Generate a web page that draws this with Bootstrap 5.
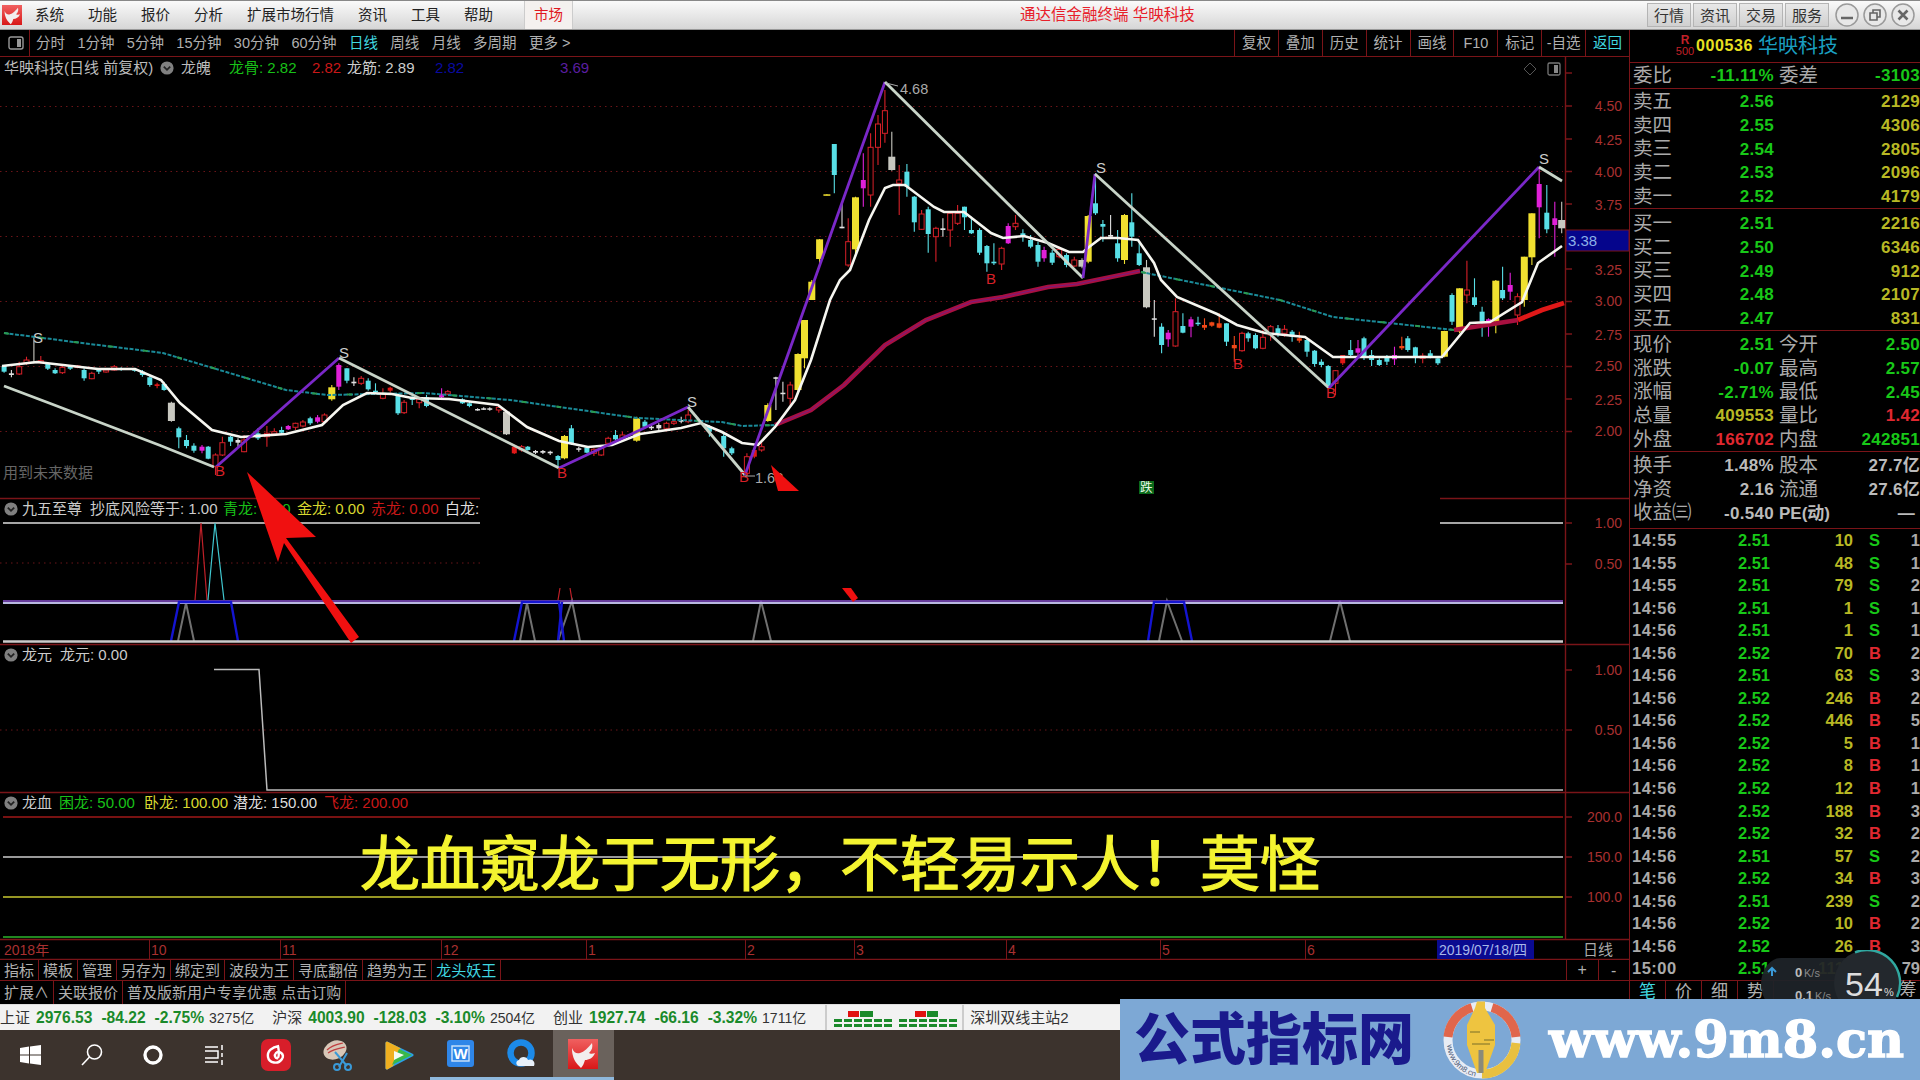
<!DOCTYPE html>
<html>
<head>
  <meta charset="UTF-8">
  <title>通达信金融终端 华映科技</title>
  <link href="https://cdn.jsdelivr.net/npm/bootstrap@5.3.0/dist/css/bootstrap.min.css" rel="stylesheet">
  <style>
    html, body {
      width: 1920px;
      height: 1080px;
      margin: 0;
      overflow: hidden;
      background: #000;
      font-family: "Liberation Sans", "Noto Sans CJK SC", sans-serif;
      font-size: 14.5px;
      line-height: 1;
      color: #b0b0b0;
    }

    /* Title bar */
    .title-bar {
      height: 30px;
      background: linear-gradient(#fafafa, #d6d6d6);
      border-top: 1px solid #888;
      border-bottom: 1px solid #999;
      color: #222;
      padding-right: 5px;
    }
    .app-logo { width: 35px; padding-left: 2px; }
    .menu-list { gap: 24px; }
    .market-tab {
      margin-left: 31px;
      width: 49px;
      height: 28px;
      background: #f4f1ef;
      border-left: 1px solid #ccc;
      border-right: 1px solid #ccc;
      color: #e01820;
    }
    .app-title { margin-left: 447px; color: #e8202a; font-size: 15.5px; }
    .side-btn {
      width: 44px;
      height: 24px;
      margin-right: 2px;
      background: linear-gradient(#e8e8e8, #d0d0d0);
      border: 1px solid #b4b4b4;
      color: #333;
      font-size: 15px;
    }
    .win-btn { margin-left: 4px; }

    /* Chart column */
    .work-area { height: 974px; }
    .chart-col { width: 1629px; }
    .quote-col { width: 291px; border-left: 1px solid #7a1418; }
    .tool-bar { height: 27px; border-bottom: 1px solid #7a1418; }
    .period-box { width: 30px; height: 26px; border-right: 1px solid #7a1418; padding-left: 8px; }
    .period-list { gap: 12.4px; padding-left: 6px; }
    .is-active { color: #40d8e0; }
    .tool-cell {
      width: 43.9px;
      height: 26px;
      border-left: 1px solid #7a1418;
    }
    .chart-canvas { display: block; width: 1629px; height: 903px; }
    .chart-canvas text { font-size: 15px; fill: #b0b0b0; }
    .chart-canvas .axis-num { font-size: 14px; fill: #a83030; }
    .chart-canvas .big-note { font-size: 60px; fill: #f4f430; stroke: #f4f430; stroke-width: 1.2px; }
    .tab-row { border-bottom: 1px solid #7a1418; font-size: 15px; }
    .tab-row-a { height: 21px; }
    .tab-row-b { height: 23px; border-bottom: 0; }
    .tab-cell { padding: 0 4px; height: 100%; border-right: 1px solid #7a1418; }
    .zoom-box { width: 63px; height: 100%; border-left: 1px solid #7a1418; font-size: 16px; }
    .zoom-box span { flex: 1; text-align: center; }
    .zoom-box span + span { border-left: 1px solid #7a1418; height: 100%; line-height: 21px; }

    /* Quote column */
    .stock-head { height: 33px; border-bottom: 1px solid #7a1418; padding-left: 45px; }
    .rank-tag { font-size: 11px; color: #c02028; text-align: center; line-height: 11px; width: 20px; }
    .rank-tag b { font-size: 12px; display: block; }
    .stock-code { font-size: 16px; font-weight: 700; color: #e8e020; margin-left: 1px; letter-spacing: .6px; }
    .stock-name { font-size: 20px; color: #1a9fc0; margin-left: 5px; }
    .quote-block { border-bottom: 1px solid #7a1418; overflow: hidden; }
    .block-ratio { height: 26px; }
    .block-sell { height: 120px; padding-top: 1px; }
    .block-buy { height: 122px; padding-top: 3px; }
    .block-stats { height: 121px; padding-top: 2px; }
    .block-info { height: 77px; padding-top: 2px; }
    .block-ticks { height: 452px; }
    .quote-row {
      display: grid;
      grid-template-columns: 40px 101px 45px 1fr;
      align-items: center;
      height: 23.7px;
      padding-left: 3px;
      font-size: 17px;
      font-weight: 700;
      white-space: nowrap;
    }
    .block-ratio .quote-row { height: 25px; }
    .quote-row > :nth-child(2), .quote-row > :nth-child(4) { text-align: right; letter-spacing: .3px; }
    .quote-row > :nth-child(3) { padding-left: 5px; }
    .zh-label { font-size: 19.5px; font-weight: 400; color: #aaa; }
    .tick-row {
      display: grid;
      grid-template-columns: 60px 78px 83px 16px 12px 1fr;
      align-items: center;
      height: 22.55px;
      padding-left: 2px;
      font-size: 16.5px;
      font-weight: 700;
      white-space: nowrap;
    }
    .tick-row > :first-child { color: #bbb; letter-spacing: .5px; }
    .tick-row > :nth-child(2), .tick-row > :nth-child(3), .tick-row > :nth-child(6) { text-align: right; }
    .tick-row > :nth-child(6), .tick-row > :first-child { color: #aaa; }
    .up-num { color: #e02830; }
    .down-num { color: #18c818; }
    .vol-num { color: #b8b824; }
    .plain-num { color: #bbb; }
    .quote-tabs { height: 23px; font-size: 17px; }
    .quote-tab { width: 36px; text-align: center; border-right: 1px solid #7a1418; height: 100%; padding-top: 2px; }

    /* Status bar and taskbar */
    .status-bar {
      height: 26px;
      background: #f2f2f2;
      border-top: 1px solid #ddd;
      color: #333;
      white-space: nowrap;
      font-size: 15px;
    }
    .status-bar b { color: #1a8a2a; margin-left: 6px; font-size: 15.6px; }
    .status-bar b + b { margin-left: 9px; }
    .status-amount { margin-left: 5px; font-size: 14px; }
    .status-group { margin-left: 18px; }
    .signal-box { height: 100%; margin-left: 19px; padding: 0 4px 0 7px; border-left: 2px solid #ccc; border-right: 2px solid #ccc; }
    .server-name { margin-left: 6px; }
    .task-bar { height: 50px; background: #3c332d; }
    .task-cell { width: 61.4px; height: 50px; }
    .task-cell.is-open { border-bottom: 3px solid #8fb8dc; }
    .task-cell.is-front { background: #6a625c; border-bottom: 3px solid #8fb8dc; }

    /* Speed widget and site banner lie over the page */
    .speed-widget { left: 1757px; top: 950px; }
    .site-banner {
      left: 1120px;
      top: 999px;
      width: 800px;
      height: 81px;
      background: #7da8d5;
      white-space: nowrap;
    }
    .site-name {
      width: 322px;
      padding-left: 14px;
      font-size: 56px;
      font-weight: 900;
      color: #1a1a8c;
    }
    .site-url {
      margin-left: 27px;
      font-family: "DejaVu Serif", serif;
      font-size: 51px;
      font-weight: 700;
      color: #fff;
      -webkit-text-stroke: 1.4px #fff;
    }
  </style>
</head>
<body>
  <svg width="0" height="0" class="position-absolute">
    <defs>
      <linearGradient id="logoRed" x1="0" y1="0" x2="0" y2="1">
        <stop offset="0" stop-color="#f06060"/>
        <stop offset="1" stop-color="#d81818"/>
      </linearGradient>
      <symbol id="tdxLogo" viewBox="0 0 30 30">
        <rect width="30" height="30" fill="url(#logoRed)"/>
        <path d="M4 9C6 14 9 15 12 14C16 13 20 9 24 4C25 8 24 11 21 14C22 15 25 15 27 14C25 19 21 21 17 21C16 24 15 27 13 29C10 26 6 22 5 17C4 14 4 11 4 9Z" fill="#f2eeee"/>
      </symbol>
      <symbol id="foldIcon" viewBox="0 0 14 14">
        <circle cx="7" cy="7" r="6.6" fill="#808080"/>
        <path d="M3.8 5.6L7 8.8L10.2 5.6" fill="none" stroke="#222" stroke-width="1.8"/>
      </symbol>
    </defs>
  </svg>

  <!-- Title bar -->
  <div class="title-bar d-flex align-items-center">
    <div class="app-logo d-flex"><svg width="20" height="20"><use href="#tdxLogo"/></svg></div>
    <div class="menu-list d-flex">
      <span>系统</span><span>功能</span><span>报价</span><span>分析</span><span>扩展市场行情</span><span>资讯</span><span>工具</span><span>帮助</span>
    </div>
    <div class="market-tab d-flex align-items-center justify-content-center">市场</div>
    <div class="app-title">通达信金融终端 华映科技</div>
    <div class="d-flex align-items-center ms-auto">
      <div class="side-btn d-flex align-items-center justify-content-center">行情</div>
      <div class="side-btn d-flex align-items-center justify-content-center">资讯</div>
      <div class="side-btn d-flex align-items-center justify-content-center">交易</div>
      <div class="side-btn d-flex align-items-center justify-content-center">服务</div>
      <svg class="win-btn" width="24" height="24"><circle cx="12" cy="12" r="11" fill="#e8e8e8" stroke="#9a9a9a" stroke-width="1.5"/><path d="M6 15H18" stroke="#666" stroke-width="2.5"/></svg>
      <svg class="win-btn" width="24" height="24"><circle cx="12" cy="12" r="11" fill="#e8e8e8" stroke="#9a9a9a" stroke-width="1.5"/><path d="M7 10H14V17H7ZM10 10V7H17V14H14" fill="none" stroke="#666" stroke-width="1.6"/></svg>
      <svg class="win-btn" width="24" height="24"><circle cx="12" cy="12" r="11" fill="#e8e8e8" stroke="#9a9a9a" stroke-width="1.5"/><path d="M7.5 7.5L16.5 16.5M16.5 7.5L7.5 16.5" stroke="#666" stroke-width="2.6"/></svg>
    </div>
  </div>

  <div class="work-area d-flex">
    <!-- Chart column -->
    <div class="chart-col d-flex flex-column">
      <div class="tool-bar d-flex align-items-center">
        <div class="period-box d-flex align-items-center">
          <svg width="16" height="14"><rect x="1" y="1" width="14" height="12" rx="2" fill="none" stroke="#999" stroke-width="1.4"/><rect x="9" y="3" width="4" height="8" fill="#999"/></svg>
        </div>
        <div class="period-list d-flex">
          <span>分时</span><span>1分钟</span><span>5分钟</span><span>15分钟</span><span>30分钟</span><span>60分钟</span><span class="is-active">日线</span><span>周线</span><span>月线</span><span>多周期</span><span>更多 &gt;</span>
        </div>
        <div class="d-flex ms-auto">
          <div class="tool-cell d-flex align-items-center justify-content-center">复权</div>
          <div class="tool-cell d-flex align-items-center justify-content-center">叠加</div>
          <div class="tool-cell d-flex align-items-center justify-content-center">历史</div>
          <div class="tool-cell d-flex align-items-center justify-content-center">统计</div>
          <div class="tool-cell d-flex align-items-center justify-content-center">画线</div>
          <div class="tool-cell d-flex align-items-center justify-content-center">F10</div>
          <div class="tool-cell d-flex align-items-center justify-content-center">标记</div>
          <div class="tool-cell d-flex align-items-center justify-content-center">-自选</div>
          <div class="tool-cell d-flex align-items-center justify-content-center is-active">返回</div>
        </div>
      </div>

      <!-- Free canvas, coordinates are page pixels -->
      <svg class="chart-canvas" viewBox="0 57 1629 903" xmlns="http://www.w3.org/2000/svg">
        <!-- axis and pane lines -->
        <g stroke="#7a1418" stroke-width="1.4" fill="none">
          <path d="M1565.5 57V940"/>
          <path d="M0 498.5H480M1440 498.5H1629"/>
          <path d="M0 644.5H1629M0 792.5H1629M0 939.5H1629M0 959.5H1629"/>
          <path d="M1566 73H1572M1566 106H1572M1566 139H1572M1566 171.5H1572M1566 204H1572M1566 236.5H1572M1566 269H1572M1566 301.5H1572M1566 334H1572M1566 366.5H1572M1566 399H1572M1566 431.5H1572"/>
          <path d="M1566 523H1572M1566 564H1572M1566 670H1572M1566 730H1572M1566 817H1572M1566 857H1572M1566 897H1572"/>
        </g>
        <g stroke="#6a1418" stroke-width="1" stroke-dasharray="1.5 4" fill="none">
          <path d="M0 106.5H1563M0 171.5H1563M0 236.5H1563M0 301.5H1563M0 366.5H1563M0 431.5H1563"/>
          <path d="M0 563H480M0 730H1563"/>
        </g>
        <g text-anchor="end">
          <text class="axis-num" x="1622" y="111">4.50</text>
          <text class="axis-num" x="1622" y="145">4.25</text>
          <text class="axis-num" x="1622" y="177">4.00</text>
          <text class="axis-num" x="1622" y="210">3.75</text>
          <text class="axis-num" x="1622" y="275">3.25</text>
          <text class="axis-num" x="1622" y="306">3.00</text>
          <text class="axis-num" x="1622" y="340">2.75</text>
          <text class="axis-num" x="1622" y="371">2.50</text>
          <text class="axis-num" x="1622" y="405">2.25</text>
          <text class="axis-num" x="1622" y="436">2.00</text>
          <text class="axis-num" x="1622" y="528">1.00</text>
          <text class="axis-num" x="1622" y="569">0.50</text>
          <text class="axis-num" x="1622" y="675">1.00</text>
          <text class="axis-num" x="1622" y="735">0.50</text>
          <text class="axis-num" x="1622" y="822">200.0</text>
          <text class="axis-num" x="1622" y="862">150.0</text>
          <text class="axis-num" x="1622" y="902">100.0</text>
        </g>
        <rect x="1566" y="230" width="63" height="21" fill="#05058c" stroke="#7a1418"/>
        <text x="1568" y="246" style="fill:#8cb0e8">3.38</text>

        <g id="candles"></g>

        <!-- long moving average -->
        <g fill="none" stroke-width="2">
          <polyline stroke="#1a8a98" stroke-dasharray="4 1.5" points="4,333 82,343 163,353 286,390 327,395 424,393 510,400 637,418 722,422 742,426 775,425"/>
          <polyline stroke="#1a8a98" stroke-dasharray="4 1.5" points="1141,272 1280,300 1333,317 1454,330"/>
          <polyline stroke="#2a9a50" stroke-dasharray="5 30" points="4,333 82,343 163,353 286,390 327,395 424,393 510,400 637,418 722,422 742,426 775,425"/>
          <polyline stroke="#2a9a50" stroke-dasharray="5 30" points="1141,272 1280,300 1333,317 1454,330"/>
        </g>
        <polyline fill="none" stroke="#a81040" stroke-width="4.6" points="775,425 811,410 844,385 885,345 926,320 971,302 1003,297 1048,287 1077,284 1140,271"/>
        <polyline fill="none" stroke="#7a1a80" stroke-width="1" points="775,425 811,410 844,385 885,345 926,320 971,302 1003,297 1048,287 1077,284 1140,271"/>
        <polyline fill="none" stroke="#a81040" stroke-width="4.6" points="1454,330 1518,320"/>
        <polyline fill="none" stroke="#e01818" stroke-width="4.8" points="1518,320 1542,310 1564,303"/>
        <!-- short moving average -->
        <polyline fill="none" stroke="#f6f6f0" stroke-width="2.6" points="2,366 37,362 98,369 135,369 161,380 180,403 212,430 241,437 286,434 322,425 343,405 367,393 392,394 412,398 449,399 498,405 527,427 559,441 588,447 612,445 640,434 681,428 701,423 722,432 742,443 758,445 775,427 795,400 811,360 830,300 840,280 850,270 869,220 885,188 893,185 905,185 934,207 944,212 964,212 991,233 1003,238 1024,236 1048,243 1069,252 1083,252 1089,247 1101,238 1118,238 1138,240 1154,263 1161,280 1177,297 1217,314 1237,325 1265,333 1305,337 1333,357 1442,357 1470,323 1490,322 1522,302 1538,263 1562,246"/>
        <!-- zigzag -->
        <g fill="none" stroke-width="2.8">
          <polyline stroke="#c8d4c8" points="4,386 49,403 159,445 214,467"/>
          <polyline stroke="#7a28c8" points="216,467 339,358"/>
          <polyline stroke="#c8d4c8" points="339,358 559,468"/>
          <polyline stroke="#7a28c8" points="559,468 640,430 688,407"/>
          <polyline stroke="#c8d4c8" points="688,407 745,475"/>
          <polyline stroke="#7a28c8" points="745,475 885,82"/>
          <polyline stroke="#c8d4c8" points="885,82 1083,278"/>
          <polyline stroke="#7a28c8" points="1083,278 1095,174"/>
          <polyline stroke="#c8d4c8" points="1095,174 1329,388"/>
          <polyline stroke="#7a28c8" points="1329,388 1539,167"/>
          <polyline stroke="#c8d4c8" points="1539,167 1562,181"/>
        </g>
        <!-- markers -->
        <text x="33" y="343" style="fill:#ccc;font-size:15px">S</text>
        <text x="339" y="358" style="fill:#ccc;font-size:15px">S</text>
        <text x="687" y="407" style="fill:#ccc;font-size:15px">S</text>
        <text x="1096" y="173" style="fill:#ccc;font-size:15px">S</text>
        <text x="1539" y="164" style="fill:#ccc;font-size:15px">S</text>
        <text x="215" y="476" style="fill:#d82028;font-size:15px">B</text>
        <text x="557" y="478" style="fill:#d82028;font-size:15px">B</text>
        <text x="739" y="482" style="fill:#d82028;font-size:15px">B</text>
        <text x="986" y="284" style="fill:#d82028;font-size:15px">B</text>
        <text x="1233" y="369" style="fill:#d82028;font-size:15px">B</text>
        <text x="1326" y="398" style="fill:#d82028;font-size:15px">B</text>
        <text x="900" y="94" style="fill:#aaa;font-size:14.5px">4.68</text>
        <text x="755" y="483" style="fill:#aaa;font-size:14.5px">1.68</text>
        <path d="M886 83L898 86M745 476L755 476" stroke="#aaa"/>
        <rect x="1139" y="481" width="15" height="13" fill="#0a6a1a"/>
        <text x="1140" y="492" style="fill:#e8f8e8;font-size:12.5px">跌</text>
        <path d="M1530 63L1536 69L1530 75L1524 69Z" fill="none" stroke="#555"/>
        <rect x="1548" y="63" width="12" height="12" rx="1.5" fill="none" stroke="#777" stroke-width="1.3"/>
        <rect x="1554" y="65" width="4" height="8" fill="#888"/>
        <text x="3" y="478" style="fill:#666">用到未来数据</text>

        <!-- main legend -->
        <text x="4" y="73" style="fill:#bbb">华映科技(日线 前复权)</text>
        <use href="#foldIcon" x="160" y="61" width="14" height="14"/>
        <text x="181" y="73" style="fill:#bbb">龙魄</text>
        <text x="229" y="73" style="fill:#18c018">龙骨: 2.82</text>
        <text x="312" y="73" style="fill:#c81818">2.82</text>
        <text x="347" y="73" style="fill:#ccc">龙筋: 2.89</text>
        <text x="435" y="73" style="fill:#0a0aa0">2.82</text>
        <text x="560" y="73" style="fill:#5a1ea0">3.69</text>

        <!-- indicator pane 1 -->
        <use href="#foldIcon" x="4" y="502" width="14" height="14"/>
        <text x="22" y="514" style="fill:#ccc">九五至尊</text>
        <text x="90" y="514" style="fill:#ccc">抄底风险等于: 1.00</text>
        <text x="223" y="514" style="fill:#18c018">青龙: 0.00</text>
        <text x="297" y="514" style="fill:#d8d830">金龙: 0.00</text>
        <text x="371" y="514" style="fill:#c81818">赤龙: 0.00</text>
        <text x="445" y="514" style="fill:#ddd">白龙:</text>
        <path d="M3 523H480M1440 523H1563" stroke="#ddd" stroke-width="1.5"/>
        <g fill="none" stroke-width="1.2">
          <polyline stroke="#c02028" points="195,600 201,523 207,600"/>
          <polyline stroke="#40c8d0" points="208,600 215,523 224,600"/>
          <path stroke="#c02028" d="M558 600L560 588M572 600L570 588"/>
        </g>
        <g fill="none" stroke="#707070" stroke-width="2">
          <polyline points="178,641 186,603 194,641"/>
          <polyline points="520,641 527,603 535,641"/>
          <polyline points="558,641 572,601 580,641"/>
          <polyline points="753,641 761,601 771,641"/>
          <polyline points="1159,641 1167,601 1182,641"/>
          <polyline points="1330,641 1340,601 1350,641"/>
        </g>
        <path d="M3 603H1563" stroke="#b8b8e0" stroke-width="2"/>
        <path d="M3 601H1563" stroke="#8a50d0" stroke-width="1.5"/>
        <g fill="none" stroke="#1414d0" stroke-width="2.4">
          <polyline points="171,641 179,602 231,602 238,641"/>
          <polyline points="514,641 522,602 559,602 564,641"/>
          <path d="M558 641L562 602"/>
          <polyline points="1148,641 1154,602 1184,602 1192,641"/>
        </g>
        <path d="M3 641.5H1563" stroke="#ccc" stroke-width="2.4"/>

        <!-- indicator pane 2 -->
        <use href="#foldIcon" x="4" y="648" width="14" height="14"/>
        <text x="22" y="660" style="fill:#ccc">龙元</text>
        <text x="60" y="660" style="fill:#ccc">龙元: 0.00</text>
        <polyline fill="none" stroke="#bbb" stroke-width="1.5" points="214,669.5 259,669.5 267,790 1563,790"/>

        <!-- indicator pane 3 -->
        <use href="#foldIcon" x="4" y="796" width="14" height="14"/>
        <text x="22" y="808" style="fill:#ccc">龙血</text>
        <text x="59" y="808" style="fill:#18c018">困龙: 50.00</text>
        <text x="144" y="808" style="fill:#d8d830">卧龙: 100.00</text>
        <text x="233" y="808" style="fill:#ddd">潜龙: 150.00</text>
        <text x="324" y="808" style="fill:#c81818">飞龙: 200.00</text>
        <path d="M3 817H1563" stroke="#a01818" stroke-width="1.5"/>
        <path d="M3 857H1563" stroke="#ccc" stroke-width="1.5"/>
        <path d="M3 897H1563" stroke="#c8c830" stroke-width="1.5"/>
        <path d="M3 937H1563" stroke="#2cb42c" stroke-width="1.5"/>
        <text class="big-note" x="360" y="886">龙血窥龙于无形，不轻易示人！莫怪</text>

        <!-- annotation arrows pasted over the chart -->
        <g fill="#f01010">
          <polygon points="247,472 316,537 286,538 359,637 351,643 284,543 278,562"/>
          <polygon points="771,465 799,491 778,491"/>
          <polygon points="842,588 851,588 858,598 853,602"/>
        </g>

        <!-- date axis -->
        <path d="M149.5 940V959M280.5 940V959M441.5 940V959M586.5 940V959M745.5 940V959M854.5 940V959M1006.5 940V959M1160.5 940V959M1305.5 940V959" stroke="#7a1418" fill="none"/>
        <rect x="1437" y="940" width="97" height="19" fill="#0a0a90"/>
        <text class="axis-num" x="4" y="955">2018年</text>
        <text class="axis-num" x="151" y="955">10</text>
        <text class="axis-num" x="282" y="955">11</text>
        <text class="axis-num" x="443" y="955">12</text>
        <text class="axis-num" x="588" y="955">1</text>
        <text class="axis-num" x="747" y="955">2</text>
        <text class="axis-num" x="856" y="955">3</text>
        <text class="axis-num" x="1008" y="955">4</text>
        <text class="axis-num" x="1162" y="955">5</text>
        <text class="axis-num" x="1307" y="955">6</text>
        <text x="1439" y="955" style="fill:#a8b8e8;font-size:14px">2019/07/18/四</text>
        <text x="1583" y="955" style="fill:#aaa">日线</text>
      </svg>

      <div class="tab-row tab-row-a d-flex align-items-center">
        <div class="tab-cell d-flex align-items-center">指标</div>
        <div class="tab-cell d-flex align-items-center">模板</div>
        <div class="tab-cell d-flex align-items-center">管理</div>
        <div class="tab-cell d-flex align-items-center">另存为</div>
        <div class="tab-cell d-flex align-items-center">绑定到</div>
        <div class="tab-cell d-flex align-items-center">波段为王</div>
        <div class="tab-cell d-flex align-items-center">寻底翻倍</div>
        <div class="tab-cell d-flex align-items-center">趋势为王</div>
        <div class="tab-cell d-flex align-items-center is-active">龙头妖王</div>
        <div class="zoom-box d-flex align-items-center ms-auto"><span>+</span><span>-</span></div>
      </div>
      <div class="tab-row tab-row-b d-flex align-items-center">
        <div class="tab-cell d-flex align-items-center">扩展∧</div>
        <div class="tab-cell d-flex align-items-center">关联报价</div>
        <div class="tab-cell d-flex align-items-center">普及版新用户专享优惠 点击订购</div>
      </div>
    </div>

    <!-- Quote column -->
    <div class="quote-col d-flex flex-column">
      <div class="stock-head d-flex align-items-center">
        <div class="rank-tag"><b>R</b>500</div>
        <span class="stock-code">000536</span>
        <span class="stock-name">华映科技</span>
      </div>
      <div class="quote-block block-ratio">
        <div class="quote-row"><span class="zh-label">委比</span><span class="down-num">-11.11%</span><span class="zh-label">委差</span><span class="down-num">-3103</span></div>
      </div>
      <div class="quote-block block-sell">
        <div class="quote-row"><span class="zh-label">卖五</span><span class="down-num">2.56</span><span></span><span class="vol-num">2129</span></div>
        <div class="quote-row"><span class="zh-label">卖四</span><span class="down-num">2.55</span><span></span><span class="vol-num">4306</span></div>
        <div class="quote-row"><span class="zh-label">卖三</span><span class="down-num">2.54</span><span></span><span class="vol-num">2805</span></div>
        <div class="quote-row"><span class="zh-label">卖二</span><span class="down-num">2.53</span><span></span><span class="vol-num">2096</span></div>
        <div class="quote-row"><span class="zh-label">卖一</span><span class="down-num">2.52</span><span></span><span class="vol-num">4179</span></div>
      </div>
      <div class="quote-block block-buy">
        <div class="quote-row"><span class="zh-label">买一</span><span class="down-num">2.51</span><span></span><span class="vol-num">2216</span></div>
        <div class="quote-row"><span class="zh-label">买二</span><span class="down-num">2.50</span><span></span><span class="vol-num">6346</span></div>
        <div class="quote-row"><span class="zh-label">买三</span><span class="down-num">2.49</span><span></span><span class="vol-num">912</span></div>
        <div class="quote-row"><span class="zh-label">买四</span><span class="down-num">2.48</span><span></span><span class="vol-num">2107</span></div>
        <div class="quote-row"><span class="zh-label">买五</span><span class="down-num">2.47</span><span></span><span class="vol-num">831</span></div>
      </div>
      <div class="quote-block block-stats">
        <div class="quote-row"><span class="zh-label">现价</span><span class="down-num">2.51</span><span class="zh-label">今开</span><span class="down-num">2.50</span></div>
        <div class="quote-row"><span class="zh-label">涨跌</span><span class="down-num">-0.07</span><span class="zh-label">最高</span><span class="down-num">2.57</span></div>
        <div class="quote-row"><span class="zh-label">涨幅</span><span class="down-num">-2.71%</span><span class="zh-label">最低</span><span class="down-num">2.45</span></div>
        <div class="quote-row"><span class="zh-label">总量</span><span class="vol-num">409553</span><span class="zh-label">量比</span><span class="up-num">1.42</span></div>
        <div class="quote-row"><span class="zh-label">外盘</span><span class="up-num">166702</span><span class="zh-label">内盘</span><span class="down-num">242851</span></div>
      </div>
      <div class="quote-block block-info">
        <div class="quote-row"><span class="zh-label">换手</span><span class="plain-num">1.48%</span><span class="zh-label">股本</span><span class="plain-num">27.7亿</span></div>
        <div class="quote-row"><span class="zh-label">净资</span><span class="plain-num">2.16</span><span class="zh-label">流通</span><span class="plain-num">27.6亿</span></div>
        <div class="quote-row"><span class="zh-label text-nowrap">收益㈢</span><span class="plain-num">-0.540</span><span class="plain-num">PE(动)</span><span class="plain-num">—&nbsp;</span></div>
      </div>
      <div class="quote-block block-ticks" id="ticks"></div>
      <div class="quote-tabs d-flex">
        <div class="quote-tab is-active">笔</div>
        <div class="quote-tab">价</div>
        <div class="quote-tab">细</div>
        <div class="quote-tab">势</div>
        <div class="ms-auto pe-1">筹</div>
      </div>
    </div>
  </div>

  <!-- Status bar -->
  <div class="status-bar d-flex align-items-center">
    <span>上证</span><b>2976.53</b><b>-84.22</b><b>-2.75%</b><span class="status-amount">3275亿</span>
    <span class="status-group">沪深</span><b>4003.90</b><b>-128.03</b><b>-3.10%</b><span class="status-amount">2504亿</span>
    <span class="status-group">创业</span><b>1927.74</b><b>-66.16</b><b>-3.32%</b><span class="status-amount">1711亿</span>
    <div class="signal-box d-flex align-items-center">
      <svg width="124" height="20" viewBox="0 0 124 20">
        <rect x="14" y="3" width="11" height="6" fill="#e01010"/><rect x="26" y="3" width="13" height="6" fill="#1a8a2a"/>
        <rect x="81" y="3" width="11" height="6" fill="#e01010"/><rect x="93" y="3" width="11" height="6" fill="#1a8a2a"/>
        <path d="M0 12.5H58M65 12.5H124M0 17.5H58M65 17.5H124" stroke="#1a8a2a" stroke-width="3" stroke-dasharray="8 2"/>
      </svg>
    </div>
    <span class="server-name">深圳双线主站2</span>
  </div>

  <!-- Taskbar -->
  <div class="task-bar d-flex">
    <div class="task-cell d-flex align-items-center justify-content-center">
      <svg width="21" height="20"><path d="M0 3L9 1.6V9.4H0ZM10 1.4L21 0V9.4H10ZM0 10.5H9V18.4L0 17ZM10 10.5H21V20L10 18.6Z" fill="#fff"/></svg>
    </div>
    <div class="task-cell d-flex align-items-center justify-content-center">
      <svg width="22" height="22" fill="none" stroke="#fff" stroke-width="1.6"><circle cx="13.5" cy="8" r="7"/><path d="M8.5 13L1 21"/></svg>
    </div>
    <div class="task-cell d-flex align-items-center justify-content-center">
      <svg width="22" height="22" fill="none"><circle cx="11" cy="11" r="8" stroke="#fff" stroke-width="3.4"/></svg>
    </div>
    <div class="task-cell d-flex align-items-center justify-content-center">
      <svg width="22" height="22" fill="none" stroke="#fff" stroke-width="1.5"><path d="M1 3H14M1 7H14V14H1M1 18H14M18 1V6M18 9V13M18 16V21"/></svg>
    </div>
    <div class="task-cell d-flex align-items-center justify-content-center">
      <svg width="30" height="32"><rect width="30" height="32" rx="7" fill="#d81e2a"/><path d="M18 7C11 8 6 12 7 18C8 24 17 26 21 20C24 15 18 11 15 14C13 16 14 20 17 19M17 19C18 17 18 12 17 7" fill="none" stroke="#fff" stroke-width="2.4"/></svg>
    </div>
    <div class="task-cell d-flex align-items-center justify-content-center">
      <svg width="30" height="32"><ellipse cx="12" cy="11" rx="12" ry="9" fill="#d8c8b8" transform="rotate(-25 12 11)"/><path d="M4 11C9 6 16 5 20 4M5 14C10 10 17 9 22 8" stroke="#c04040" stroke-width="1.2" fill="none"/><path d="M12 13L24 27M24 14L16 28" stroke="#3a9ad8" stroke-width="2"/><circle cx="25" cy="28" r="3" fill="none" stroke="#3a9ad8" stroke-width="2"/><circle cx="14" cy="28" r="3" fill="none" stroke="#3a9ad8" stroke-width="2"/></svg>
    </div>
    <div class="task-cell d-flex align-items-center justify-content-center">
      <svg width="30" height="32" stroke-linejoin="round"><path d="M3 4L28 16L3 29Z" fill="#2aa0e8" stroke="#2aa0e8" stroke-width="3"/><path d="M3 4L15 10L8 26L3 29Z" fill="#f0b020" stroke="#f0b020" stroke-width="3"/><path d="M15 10L28 16L8 26Z" fill="#3ab84a"/><path d="M10 12L20 16L10 21Z" fill="#f4fbf4"/></svg>
    </div>
    <div class="task-cell is-open d-flex align-items-center justify-content-center">
      <svg width="27" height="27"><rect width="27" height="27" rx="3" fill="#2f86e8"/><rect x="5" y="6" width="17" height="15" fill="none" stroke="#cfe4fa" stroke-width="1.4"/><text x="13.5" y="19" text-anchor="middle" font-size="15" font-weight="700" fill="#fff" font-family="Liberation Sans">W</text></svg>
    </div>
    <div class="task-cell is-open d-flex align-items-center justify-content-center">
      <svg width="30" height="30"><circle cx="14" cy="14" r="10.5" fill="none" stroke="#1c8ae8" stroke-width="6.5"/><path d="M12 27C9 27 8 22 12 21C13 17 20 17 21 21C25 19 29 23 27 27Z" fill="#e8f0f8"/></svg>
    </div>
    <div class="task-cell is-front d-flex align-items-center justify-content-center">
      <svg width="30" height="30"><use href="#tdxLogo"/></svg>
    </div>
  </div>

  <!-- Network speed widget -->
  <svg class="speed-widget position-absolute" width="150" height="60" viewBox="0 0 150 60">
    <path d="M24 8H110V60H24A20 26 0 0 1 24 8Z" fill="#1e2328" fill-opacity=".94"/>
    <circle cx="110" cy="33" r="33" fill="#23282d"/>
    <path d="M98 2.3A33 33 0 0 1 140 47" fill="none" stroke="#30a8a0" stroke-width="2.4"/>
    <path d="M15 26V18M11 22L15 18L19 22" stroke="#3a9ad8" stroke-width="2" fill="none"/>
    <text x="38" y="27" fill="#bbb" font-size="13" font-weight="700" font-family="Liberation Sans">0</text>
    <text x="47" y="27" fill="#888" font-size="11" font-family="Liberation Sans">K/s</text>
    <text x="38" y="50" fill="#bbb" font-size="13" font-weight="700" font-family="Liberation Sans">0.1</text>
    <text x="58" y="50" fill="#888" font-size="11" font-family="Liberation Sans">K/s</text>
    <text x="88" y="46" fill="#ddd" font-size="34" font-family="Liberation Sans">54</text>
    <text x="127" y="46" fill="#ddd" font-size="11" font-family="Liberation Sans">%</text>
  </svg>

  <!-- Site banner -->
  <div class="site-banner position-absolute d-flex align-items-center">
    <div class="site-name">公式指标网</div>
    <svg width="80" height="80" viewBox="0 0 80 80">
      <circle cx="40" cy="40" r="34" fill="none" stroke="#e8ecf4" stroke-width="9"/>
      <path d="M6 37A34 34 0 0 1 30 7.5M50 7.5A34 34 0 0 1 74 37" fill="none" stroke="#e0664c" stroke-width="9"/>
      <path d="M74 43A34 34 0 0 1 40 74" fill="none" stroke="#e8c040" stroke-width="9"/>
      <polygon points="35,1.6 43,1.6 43,8 53,25 53,45 43,73 35,73 25,45 25,25 33,8" fill="#eec440"/>
      <path d="M39 50V73" stroke="#8a8a7a" stroke-width="5"/>
      <path d="M28 32H38M42 40H52M30 44H48" stroke="#a08a30" stroke-width="1.4"/>
      <path id="logoArc" d="M5 45A35 35 0 0 0 37 77" fill="none"/>
      <text font-size="8" fill="#50607a" font-family="Liberation Sans"><textPath href="#logoArc">www.9m8.cn</textPath></text>
    </svg>
    <div class="site-url">www.9m8.cn</div>
  </div>

  <script src="https://cdn.jsdelivr.net/npm/bootstrap@5.3.0/dist/js/bootstrap.bundle.min.js"></script>
  <script>
    // Tick list: time, price, volume, side, trailing digit
    const ticks = [
      ["14:55","2.51","10","S","1"],["14:55","2.51","48","S","1"],["14:55","2.51","79","S","2"],
      ["14:56","2.51","1","S","1"],["14:56","2.51","1","S","1"],["14:56","2.52","70","B","2"],
      ["14:56","2.51","63","S","3"],["14:56","2.52","246","B","2"],["14:56","2.52","446","B","5"],
      ["14:56","2.52","5","B","1"],["14:56","2.52","8","B","1"],["14:56","2.52","12","B","1"],
      ["14:56","2.52","188","B","3"],["14:56","2.52","32","B","2"],["14:56","2.51","57","S","2"],
      ["14:56","2.52","34","B","3"],["14:56","2.51","239","S","2"],["14:56","2.52","10","B","2"],
      ["14:56","2.52","26","B","3"],["15:00","2.51","1117","","79"]
    ];
    document.getElementById("ticks").innerHTML = ticks.map(t =>
      `<div class="tick-row"><span>${t[0]}</span><span class="down-num">${t[1]}</span><span class="vol-num">${t[2]}</span><span></span>` +
      `<span class="${t[3] === "B" ? "up-num" : "down-num"}">${t[3]}</span><span>${t[4]}</span></div>`
    ).join("");

    // Candles, measured off the picture in three stretches: [x, wickTop, wickBottom, bodyTop, bodyBottom, kind]
    // c cyan, r hollow red, R solid red, m magenta, y yellow, g grey, w white, o orange
    const stretches = [
      { x0: 0, sx: 2.45, y0: 320, rows: [
        [10,135,158,138,155,"c"],[28,150,172,160,165,"w"],[47,125,165,140,162,"r"],[65,110,135,120,130,"r"],
        [83,50,130,125,128,"g"],[100,108,130,122,128,"r"],[117,128,150,132,146,"c"],[135,145,162,150,160,"c"],
        [153,135,162,142,158,"r"],[172,135,150,137,146,"c"],[190,135,145,138,142,"r"],[206,145,182,150,175,"c"],
        [225,155,178,160,176,"r"],[242,148,162,150,155,"c"],[260,148,158,150,156,"r"],[280,135,152,140,150,"r"],
        [297,142,152,145,150,"c"],[330,145,155,148,152,"c"],[349,150,170,155,165,"c"],[367,165,200,172,195,"c"],
        [385,188,205,193,198,"R"],[402,185,212,192,210,"c"],[420,245,305,248,303,"g"],[438,320,385,325,352,"c"],
        [457,345,385,360,378,"c"],[475,370,398,377,392,"c"],[495,375,400,380,392,"m"],[510,378,418,380,416,"c"],
        [528,400,465,405,440,"r"],[545,350,408,368,405,"r"],[565,348,378,350,365,"c"],[583,355,380,360,368,"w"],
        [598,345,397,360,395,"r"],[632,325,360,340,355,"c"],[654,318,380,340,350,"r"],[672,325,345,335,342,"r"],
        [690,320,340,330,338,"c"],[706,315,330,318,328,"m"],[724,308,330,310,322,"r"],[742,300,322,306,318,"r"],
        [760,290,315,295,310,"c"],[778,285,310,292,305,"m"],[795,280,310,285,305,"r"],[813,195,242,202,238,"y"],
        [830,130,210,135,200,"m"],[850,145,190,145,182,"c"],[867,172,198,185,190,"w"],[885,168,195,175,190,"r"],
        [902,175,212,182,208,"c"],[920,190,220,212,215,"c"],[938,205,238,222,235,"r"],[956,200,218,203,212,"R"],
        [975,220,285,228,280,"c"],[990,240,282,247,278,"r"],[1010,228,255,232,240,"c"],[1027,230,265,238,248,"r"],
        [1045,225,262,232,258,"c"],[1082,205,238,222,232,"m"],[1097,210,225,215,222,"r"],[1133,235,252,238,250,"c"],
        [1150,245,262,250,258,"c"],[1170,265,272,267,270,"w"],[1185,262,270,265,268,"w"],[1200,262,272,265,268,"w"],
        [1222,258,278,262,270,"r"],[1241,272,345,275,343,"g"],[1260,375,402,380,400,"R"],[1278,375,395,380,390,"r"],
        [1293,378,392,380,390,"c"],[1312,390,402,393,398,"w"],[1330,390,402,393,398,"w"],[1348,392,405,395,400,"w"],
        [1367,405,440,408,420,"c"],[1383,345,418,348,415,"y"],[1400,315,375,325,370,"c"],[1418,380,395,385,388,"w"],
        [1438,380,400,382,398,"c"],[1455,385,408,388,400,"r"],[1473,380,408,385,405,"r"],[1490,350,375,355,370,"r"],
        [1508,330,360,345,358,"c"],[1525,335,365,345,358,"r"],[1560,290,365,295,362,"y"]
      ]},
      { x0: 640, sx: 2.45, y0: 60, rows: [
        [12,1080,1105,1085,1100,"c"],[28,1095,1110,1100,1105,"w"],[46,1090,1110,1095,1105,"w"],[65,1085,1110,1090,1105,"r"],
        [83,1080,1095,1085,1090,"r"],[101,1070,1090,1080,1085,"w"],[118,1050,1090,1065,1085,"r"],[170,1095,1130,1100,1115,"c"],
        [205,1120,1190,1128,1165,"c"],[225,1160,1185,1165,1180,"c"],[262,1180,1245,1190,1240,"r"],[280,1165,1195,1170,1190,"R"],
        [298,1145,1175,1160,1170,"r"],[313,1030,1085,1035,1083,"y"],[333,950,1050,952,955,"w"],[350,965,1025,998,1000,"w"],
        [368,965,1035,975,1015,"r"],[387,880,1000,882,990,"y"],[403,780,925,780,895,"y"],[421,660,720,665,720,"y"],
        [440,537,610,538,597,"y"],[458,403,406,403,406,"y"],[476,252,400,252,345,"c"],[495,430,505,500,505,"w"],
        [510,475,620,545,615,"r"],[528,410,590,412,568,"y"],[547,280,440,360,385,"m"],[565,220,440,262,405,"r"],
        [583,165,315,192,262,"r"],[600,90,248,152,220,"r"],[617,215,332,290,330,"g"],[635,315,465,360,370,"r"],
        [654,312,410,335,380,"c"],[672,408,515,410,487,"c"],[690,450,510,462,508,"r"],[706,440,578,448,522,"c"],
        [725,500,605,505,530,"r"],[742,475,530,505,510,"w"],[760,460,560,460,510,"r"],[778,435,495,460,490,"r"],
        [795,440,510,440,472,"c"],[812,470,522,510,520,"c"],[832,505,585,510,578,"c"],[850,555,635,558,610,"c"],
        [867,550,615,605,610,"c"],[886,560,630,565,612,"r"],[902,490,552,498,550,"m"],[920,465,510,490,500,"r"],
        [938,508,545,520,530,"c"],[957,525,565,540,560,"c"],[975,545,620,555,605,"c"],[990,560,605,570,595,"m"],
        [1010,570,615,578,608,"c"],[1027,560,595,568,590,"r"],[1045,580,622,585,615,"c"],[1064,590,620,600,618,"r"],
        [1083,595,625,600,620,"g"],[1098,465,610,468,605,"y"],[1116,340,465,430,460,"c"],[1134,480,545,492,500,"c"],
        [1153,465,530,525,530,"w"],[1170,510,605,550,595,"c"],[1187,462,612,465,600,"y"],[1205,400,560,487,530,"c"],
        [1223,550,618,580,615,"c"],[1241,600,745,622,742,"g"],[1260,720,830,775,778,"w"],[1278,790,880,800,855,"c"],
        [1294,810,860,818,838,"m"],[1312,715,860,755,858,"r"],[1330,760,820,798,818,"c"],[1350,770,832,778,800,"m"],
        [1367,770,798,788,792,"c"],[1383,775,810,795,803,"o"],[1401,785,800,787,797,"o"],[1419,760,805,790,803,"o"],
        [1437,790,858,790,845,"c"],[1456,828,905,855,865,"o"],[1475,815,875,820,872,"r"],[1490,815,845,820,835,"c"],
        [1508,820,868,825,865,"c"],[1526,810,868,832,865,"r"],[1545,795,842,800,825,"r"]
      ]},
      { x0: 1000, sx: 2.489, y0: 120, rows: [
        [692,615,650,625,640,"c"],[708,615,650,628,640,"r"],[727,630,665,635,650,"c"],[745,635,668,655,662,"o"],
        [764,655,710,660,695,"c"],[783,690,740,692,732,"c"],[800,718,742,725,735,"c"],[817,735,800,738,798,"c"],
        [835,750,825,752,790,"r"],[853,705,735,705,730,"R"],[873,660,712,690,705,"c"],[891,660,710,685,698,"m"],
        [906,650,720,655,712,"c"],[925,690,738,705,720,"c"],[944,715,738,720,735,"c"],[963,705,735,710,725,"c"],
        [982,680,735,705,718,"m"],[1000,650,690,678,685,"o"],[1015,648,695,655,690,"c"],[1034,680,730,682,708,"c"],
        [1052,700,730,708,715,"r"],[1071,690,715,700,710,"c"],[1090,712,735,715,730,"c"],[1106,632,712,633,710,"y"],
        [1125,520,615,525,605,"c"],[1144,505,640,505,635,"y"],[1162,422,550,510,525,"r"],[1181,475,560,532,555,"c"],
        [1200,560,650,575,605,"c"],[1216,595,650,598,615,"m"],[1234,480,640,482,605,"y"],[1251,440,540,510,535,"c"],
        [1270,458,540,495,515,"m"],[1288,520,615,530,585,"r"],[1305,410,560,410,540,"y"],[1324,280,435,280,412,"y"],
        [1342,140,355,192,262,"m"],[1361,195,340,278,328,"c"],[1381,245,410,295,315,"m"],[1398,245,340,300,325,"g"]
      ]}
    ];
    const candleColors = { c: "#58dfe6", r: "#d82028", R: "#e01818", m: "#e020d8", y: "#f0e030", g: "#c8c8c0", w: "#e0e0e0", o: "#f04818" };
    let candleSvg = "";
    stretches.forEach(s => {
      s.rows.forEach(([u, wt, wb, bt, bb, kind]) => {
        const x = +(s.x0 + u / s.sx).toFixed(1);
        const y = v => +(s.y0 + v / 3).toFixed(1);
        const color = candleColors[kind];
        const width = kind === "y" || kind === "g" ? 7 : 5;
        const fill = kind === "r" ? "#000" : color;
        candleSvg += `<path d="M${x} ${y(wt)}V${y(wb)}" stroke="${color}" stroke-width="1.1"/>`;
        candleSvg += `<rect x="${x - width / 2}" y="${y(bt)}" width="${width}" height="${Math.max(y(bb) - y(bt), 1.5)}" fill="${fill}" stroke="${kind === "r" ? color : "none"}"/>`;
      });
    });
    document.getElementById("candles").innerHTML = candleSvg;
  </script>
</body>
</html>
